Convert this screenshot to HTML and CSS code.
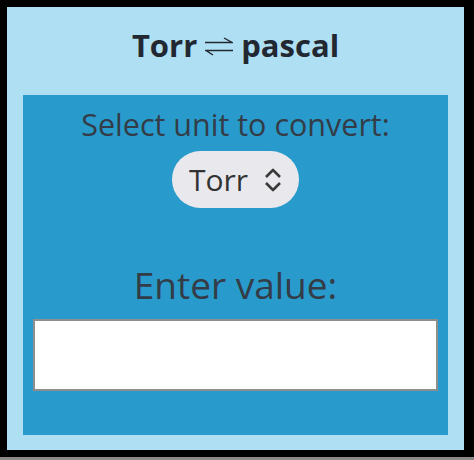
FILE: index.html
```html
<!DOCTYPE html>
<html lang="en">
<head>
  <meta charset="UTF-8">
  <meta name="viewport" content="width=device-width, initial-scale=1.0">
  <title>Torr to pascal</title>
  <link rel="stylesheet" href="styles.css">
</head>
<body>

<div class="frame">
  <div class="converter">
    <h1 class="title">
      <span>Torr</span>
      <svg class="arrows" width="28" height="20" viewBox="0 0 28 20">
        <path d="M0 6.5 H27 L19 2" fill="none" stroke="#222831" stroke-width="1.4"/>
        <path d="M28 14.5 H1 L8 19" fill="none" stroke="#222831" stroke-width="1.4"/>
      </svg>
      <span>pascal</span>
    </h1>

    <div class="panel">
      <label for="unit" class="label">Select unit to convert:</label>
      <div class="select-wrap">
        <select id="unit">
          <option value="torr">Torr</option>
          <option value="pascal">pascal</option>
        </select>
        <svg class="chevrons" width="20" height="26" viewBox="0 0 20 26">
          <path d="M3 10 L10 3 L17 10" fill="none" stroke="#3a3a3a" stroke-width="2.6" stroke-linejoin="round"/>
          <path d="M3 16 L10 23 L17 16" fill="none" stroke="#3a3a3a" stroke-width="2.6" stroke-linejoin="round"/>
        </svg>
      </div>

      <label for="value" class="label big">Enter value:</label>
      <input type="text" id="value">
    </div>
  </div>
</div>

</body>
</html>
```

FILE: styles.css
```css
body {
  margin: 0;
  background: #8a8a8a;
  font-family: "Open Sans", sans-serif;
  color: #333c47;
}

.frame {
  height: 443px;
  border: 7px solid #000;
  border-right-width: 10px;
  background: #000;
}

.converter {
  background: #afdff3;
  height: 443px;
  padding: 0 16px;
  display: flex;
  flex-direction: column;
}

.title {
  margin: 0 0 12px;
  height: 76px;
  display: flex;
  align-items: center;
  justify-content: center;
  gap: 8px;
  font-size: 31px;
  font-weight: 700;
  color: #222831;
}

.arrows {
  margin-top: 2px;
}

.panel {
  background: #289bcc;
  height: 340px;
  display: flex;
  flex-direction: column;
  align-items: center;
  padding: 0 10px;
}

.label {
  font-size: 30.5px;
  line-height: 40px;
  margin-top: 9px;
}

.big {
  font-size: 37px;
  line-height: 50px;
  margin-top: 52px;
}

.select-wrap {
  display: flex;
  align-items: center;
  gap: 14px;
  background: #e9e9ed;
  border-radius: 29px;
  height: 57px;
  padding: 0 16px 0 17px;
  margin-top: 7px;
}

select {
  appearance: none;
  border: none;
  background: transparent;
  font-family: "Open Sans", sans-serif;
  font-size: 30px;
  color: #333;
  width: 60px;
  padding: 0;
  outline: none;
}

input {
  box-sizing: border-box;
  width: 100%;
  height: 72px;
  border: 2px solid #8e8e8e;
  background: #fff;
  margin-top: 9px;
}
```
